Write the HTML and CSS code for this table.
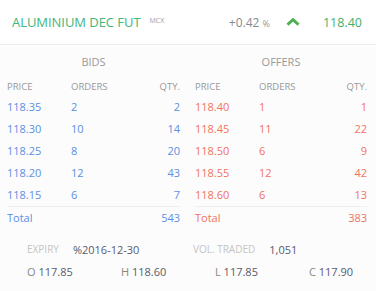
FILE: index.html
```html
<!DOCTYPE html>
<html>
<head>
<meta charset="utf-8">
<link rel="stylesheet" href="styles.css">
</head>
<body>
<div class="widget">
  <header class="head">
    <span class="title">ALUMINIUM DEC FUT</span>
    <span class="exch">MCX</span>
    <span class="spacer"></span>
    <span class="change">+0.42 <small>%</small></span>
    <svg class="chev" width="14" height="8" viewBox="0 0 14 8"><path d="M1.5 6.6 L7 1.6 L12.5 6.6" fill="none" stroke="#4caf50" stroke-width="2.8" stroke-linejoin="miter"/></svg>
    <span class="ltp">118.40</span>
  </header>
  <div class="depth">
    <section class="side bids">
      <div class="side-title">BIDS</div>
      <div class="row hdr"><span>PRICE</span><span>ORDERS</span><span class="q">QTY.</span></div>
      <div class="row"><span>118.35</span><span>2</span><span class="q">2</span></div>
      <div class="row"><span>118.30</span><span>10</span><span class="q">14</span></div>
      <div class="row"><span>118.25</span><span>8</span><span class="q">20</span></div>
      <div class="row"><span>118.20</span><span>12</span><span class="q">43</span></div>
      <div class="row"><span>118.15</span><span>6</span><span class="q">7</span></div>
      <div class="row total"><span>Total</span><span></span><span class="q">543</span></div>
    </section>
    <section class="side offers">
      <div class="side-title">OFFERS</div>
      <div class="row hdr"><span>PRICE</span><span>ORDERS</span><span class="q">QTY.</span></div>
      <div class="row"><span>118.40</span><span>1</span><span class="q">1</span></div>
      <div class="row"><span>118.45</span><span>11</span><span class="q">22</span></div>
      <div class="row"><span>118.50</span><span>6</span><span class="q">9</span></div>
      <div class="row"><span>118.55</span><span>12</span><span class="q">42</span></div>
      <div class="row"><span>118.60</span><span>6</span><span class="q">13</span></div>
      <div class="row total"><span>Total</span><span></span><span class="q">383</span></div>
    </section>
  </div>
  <div class="meta">
    <div class="meta-item left"><span class="lbl">EXPIRY</span><span class="val">%2016-12-30</span></div>
    <div class="meta-item right"><span class="lbl">VOL. TRADED</span><span class="val">1,051</span></div>
  </div>
  <div class="ohlc">
    <div class="cell"><span class="k">O</span> 117.85</div>
    <div class="cell"><span class="k">H</span> 118.60</div>
    <div class="cell"><span class="k">L</span> 117.85</div>
    <div class="cell"><span class="k">C</span> 117.90</div>
  </div>
</div>
</body>
</html>
```

FILE: styles.css
```css
html, body {
  margin: 0;
  padding: 0;
  background: #fcfcfc;
}
body {
  font-family: "Open Sans", "Noto Sans", sans-serif;
  width: 376px;
  height: 291px;
  overflow: hidden;
}
.widget {
  width: 376px;
}
.head {
  display: flex;
  align-items: center;
  height: 44px;
  padding: 0 14px 0 12px;
  background: #fff;
  border-bottom: 1px solid #eeeeee;
}
.title {
  font-size: 13px;
  color: #3fb67a;
  letter-spacing: -0.05px;
}
.exch {
  font-size: 7px;
  color: #9b9bb5;
  margin-left: 9px;
  margin-top: -3px;
}
.spacer { flex: 1; }
.change {
  font-size: 12px;
  color: #8a8a8a;
}
.change small {
  font-size: 9px;
  color: #999;
}
.chev {
  margin-left: 16px;
  margin-top: -1px;
}
.ltp {
  margin-left: 23px;
  font-size: 12.5px;
  color: #46b06a;
}
.depth {
  display: flex;
  padding-top: 6px;
}
.side {
  width: 188px;
  box-sizing: border-box;
  padding: 0 8px 0 7px;
}
.offers {
  padding: 0 9px 0 7px;
}
.side-title {
  text-align: center;
  font-size: 11px;
  color: #999;
  height: 22px;
  line-height: 22px;
  margin-bottom: 5px;
}
.row {
  display: grid;
  grid-template-columns: 64px 1fr 50px;
  height: 22px;
  line-height: 22px;
  font-size: 11px;
}
.row .q { text-align: right; }
.row.hdr {
  height: 18px;
  line-height: 18px;
  font-size: 9.5px;
}
.bids .row { color: #5b8fe3; }
.offers .row { color: #f0735f; }
.side .row.hdr { color: #999; }
.row.total {
  border-top: 1px solid #efefef;
}
.meta {
  display: flex;
  margin-top: 10px;
  height: 20px;
  align-items: center;
}
.meta-item {
  width: 188px;
  box-sizing: border-box;
  display: flex;
  gap: 14px;
  align-items: center;
}
.meta-item.left { padding-left: 27px; }
.meta-item.right { padding-left: 5px; }
.lbl {
  font-size: 10px;
  color: #c4c4c4;
}
.val {
  font-size: 11px;
  color: #5a5a6a;
}
.ohlc {
  display: grid;
  grid-template-columns: repeat(4, 94px);
  height: 22px;
  line-height: 22px;
  margin-top: 2px;
  font-size: 11px;
  color: #5a5a6a;
}
.ohlc .cell { padding-left: 27px; }
.ohlc .k { color: #888; }
```
